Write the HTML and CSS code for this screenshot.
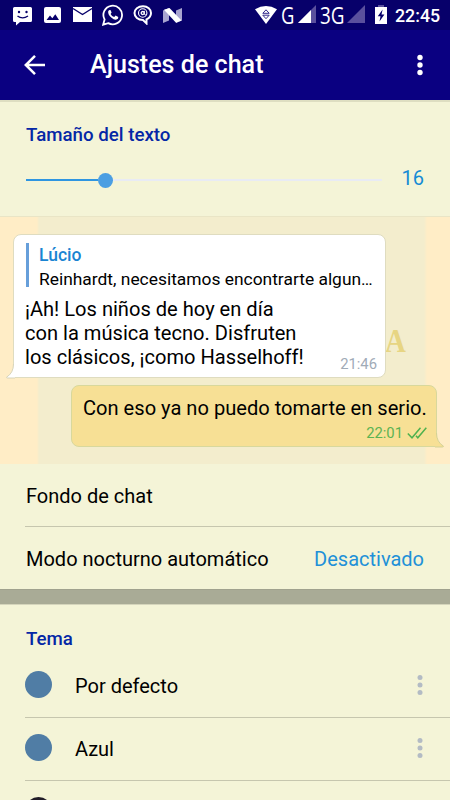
FILE: index.html
```html
<!DOCTYPE html>
<html lang="es">
<head>
    <meta charset="UTF-8">
    <meta name="viewport" content="width=device-width, initial-scale=1.0">
    <title>Ajustes de chat</title>
    <link rel="stylesheet" href="styles.css">
</head>
<body>
    <div class="status-bar">
        <div class="notifications">
            <svg width="19" height="19" viewBox="0 0 19 19">
                <path d="M1.500 0h16q1.500 0 1.500 1.500v12q0 1.500-1.500 1.500H7l-4 3.500V15H1.500Q0 15 0 13.500v-12Q0 0 1.500 0z" fill="#fff"/>
                <circle cx="6" cy="5" r="1.200" fill="#07006a"/>
                <circle cx="13.500" cy="5" r="1.200" fill="#07006a"/>
                <path d="M4.500 9q5 3.800 10.500 0" fill="none" stroke="#07006a" stroke-width="1.400"/>
            </svg>
            <svg class="n-image" width="17" height="16" viewBox="0 0 17 16">
                <rect width="17" height="16" rx="2" fill="#fff"/>
                <path d="M2.500 13l3.500-4.500 2.300 2.700 3-4 3.700 5.800z" fill="#07006a"/>
            </svg>
            <svg class="n-mail" width="19" height="15" viewBox="0 0 19 15">
                <path d="M0 0h19v15H0z" fill="#fff"/>
                <path d="M0 1.500l9.500 6 9.500-6" fill="none" stroke="#07006a" stroke-width="1.400"/>
            </svg>
            <svg class="n-whatsapp" width="22" height="22" viewBox="0 0 22 22">
                <path d="M1.200 20.600l1.400-5.100a9.300 9.300 0 1 1 3.600 3.600z" fill="none" stroke="#fff" stroke-width="1.800"/>
                <path d="M6.200 7.300q1-1.900 2.300-1.200l1.100 2.500-1 1.300q1.100 2.200 3.600 3.200l1.400-1.500 2.700 1.300q.2 2-1.900 2.700-2.100.5-5.200-2.100-3.500-3-3-6.200z" fill="#fff"/>
            </svg>
            <svg class="n-chat" width="20" height="20" viewBox="0 0 20 20">
                <path d="M10 1.200c-5 0-8.500 3-8.500 6.900s3.500 7 8.500 7l3.500 3.300v-4c3-1.300 4.500-3.500 4.500-6.300 0-3.900-3.300-6.900-8-6.900z" fill="none" stroke="#fff" stroke-width="2"/>
                <circle cx="9.700" cy="8" r="4.200" fill="none" stroke="#fff" stroke-width="1.100"/>
                <circle cx="9.700" cy="8" r="1.500" fill="none" stroke="#fff" stroke-width="1.300"/>
                <path d="M11.400 5.800v3.600l1.600.8" fill="none" stroke="#fff" stroke-width=".9"/>
            </svg>
            <svg class="n-nougat" width="19" height="15" viewBox="0 0 19 15">
                <path d="M0 2.500L6 0v12.500L0 15z" fill="#a8a4cf"/>
                <path d="M13 2.500L19 0v12.500L13 15z" fill="#a8a4cf"/>
                <path d="M1 1.800L6.500 0l12 12.500-5.500 2.300z" fill="#fff"/>
            </svg>
        </div>
        <div class="system">
            <svg class="s-wifi" width="22" height="18" viewBox="0 0 22 18">
                <path d="M0 3.200q11-6.400 22 0L11 18z" fill="#fff"/>
                <path d="M7.800 7.300L11 3.800l3.200 3.500zM7.800 9.200h6.400L11 12.700z" fill="#fff" stroke="#33298c" stroke-width="1"/>
            </svg>
            <span class="network g">G</span>
            <svg class="s-signal" width="18" height="18" viewBox="0 0 18 18">
                <path d="M18 0v18H0z" fill="#5a509d"/>
                <path d="M13 5v13H0z" fill="#fff"/>
            </svg>
            <span class="network g3">3G</span>
            <svg class="s-signal2" width="18" height="18" viewBox="0 0 18 18">
                <path d="M18 0v18H0z" fill="#5a509d"/>
            </svg>
            <svg class="s-battery" width="12" height="19" viewBox="0 0 12 19">
                <path d="M3 0h6v2H3z" fill="#5a509d"/>
                <path d="M0 2h12v17H0z" fill="#fff"/>
                <path d="M7.600 4.500L2.800 11.300h2.700l-1 5.200 4.900-7H6.500z" fill="#07006a"/>
            </svg>
            <span class="clock">22:45</span>
        </div>
    </div>

    <header class="toolbar">
        <svg width="22" height="22" viewBox="0 0 22 22">
            <path d="M21 11H2.500M11 1.800L1.800 11l9.200 9.200" fill="none" stroke="#fff" stroke-width="2.500"/>
        </svg>
        <h1>Ajustes de chat</h1>
        <svg class="dots" width="6" height="22" viewBox="0 0 6 22">
            <circle cx="3" cy="3.500" r="2.700"/>
            <circle cx="3" cy="11" r="2.700"/>
            <circle cx="3" cy="18.500" r="2.700"/>
        </svg>
    </header>

    <section class="text-size">
        <h2>Tamaño del texto</h2>
        <div class="slider-row">
            <div class="slider">
                <div class="filled"></div>
                <div class="thumb"></div>
                <div class="rest"></div>
            </div>
            <span class="size-value">16</span>
        </div>
    </section>

    <section class="preview">
        <span class="wallpaper-letter">A</span>
        <div class="bubble incoming">
            <div class="reply">
                <div class="reply-name">Lúcio</div>
                <div class="reply-text">Reinhardt, necesitamos encontrarte algun…</div>
            </div>
            <p>¡Ah! Los niños de hoy en día<br>con la música tecno. Disfruten<br>los clásicos, ¡como Hasselhoff!</p>
            <span class="time">21:46</span>
            <svg class="tail" width="9" height="15" viewBox="0 0 9 15">
                <path d="M9 0H7.500Q7.500 9 .5 13.200q0 .8 1.200.8H9z" fill="#fff"/>
                <path d="M7.500 0Q7.500 9 .5 13.200q0 .8 1.200.8H9" fill="none" stroke="#d2d0b5" stroke-width=".9"/>
            </svg>
        </div>
        <div class="bubble outgoing">
            <p>Con eso ya no puedo tomarte en serio.</p>
            <div class="sent">
                <span>22:01</span>
                <svg width="20" height="12" viewBox="0 0 20 12">
                    <path d="M.8 6.500l4.200 4.300L13.500.8M9 8.800l1.800 2L19.300.8" fill="none" stroke="#4fb14e" stroke-width="1.500"/>
                </svg>
            </div>
            <svg class="tail" width="9" height="15" viewBox="0 0 9 15">
                <path d="M0 0h1.500q0 9 7 13.200 0 .8-1.200.8H0z" fill="#f7e095"/>
                <path d="M1.500 0q0 9 7 13.200 0 .8-1.200.8H0" fill="none" stroke="#cfd094" stroke-width=".9"/>
            </svg>
        </div>
    </section>

    <section class="options">
        <div class="row">
            <span>Fondo de chat</span>
        </div>
        <div class="row">
            <span>Modo nocturno automático</span>
            <span class="row-value">Desactivado</span>
        </div>
    </section>

    <div class="separator"></div>

    <section class="themes">
        <h2>Tema</h2>
        <div class="theme">
            <span class="color"></span>
            <span class="name">Por defecto</span>
            <svg class="dots" width="6" height="22" viewBox="0 0 6 22">
                <circle cx="3" cy="3.500" r="2.500"/>
                <circle cx="3" cy="11" r="2.500"/>
                <circle cx="3" cy="18.500" r="2.500"/>
            </svg>
        </div>
        <div class="theme">
            <span class="color"></span>
            <span class="name">Azul</span>
            <svg class="dots" width="6" height="22" viewBox="0 0 6 22">
                <circle cx="3" cy="3.500" r="2.500"/>
                <circle cx="3" cy="11" r="2.500"/>
                <circle cx="3" cy="18.500" r="2.500"/>
            </svg>
        </div>
        <div class="theme">
            <span class="color dark"></span>
        </div>
    </section>
</body>
</html>
```
FILE: styles.css
```css
* {
    box-sizing: border-box;
}
body {
    display: flex;
    flex-direction: column;
    margin: 0;
    height: 800px;
    overflow: hidden;
    background: #f4f4d7;
    color: #000;
    font-family: Roboto, sans-serif;
    font-size: 20px;
}
h1, h2, p {
    margin: 0;
}
svg {
    display: block;
    flex-shrink: 0;
}

/* status bar */
.status-bar {
    display: flex;
    flex-shrink: 0;
    justify-content: space-between;
    height: 30px;
    background: #07006a;
}
.notifications, .system {
    display: flex;
    align-items: flex-start;
}
.notifications {
    padding: 7px 0 0 13px;
}
.n-image {
    margin-left: 12px;
}
.n-mail {
    margin-left: 12px;
}
.n-whatsapp {
    margin: -3px 0 0 10px;
}
.n-chat {
    margin: -2px 0 0 9px;
}
.n-nougat {
    margin: 1px 0 0 10px;
}
.system {
    padding: 5px 10px 0 0;
}
.network {
    color: #fff;
    font-family: "Open Sans", sans-serif;
    font-size: 23px;
    line-height: 30px;
    margin-top: -5px;
    transform-origin: left;
    white-space: nowrap;
}
.g {
    width: 14px;
    margin-left: 4px;
    transform: scaleX(.8);
}
.g3 {
    width: 25px;
    margin-left: 4px;
    transform: scaleX(.82);
}
.s-wifi {
    margin-top: 1px;
}
.s-signal {
    margin-left: 3px;
}
.s-signal2 {
    margin-left: 2px;
}
.s-battery {
    margin-left: 10px;
}
.clock {
    width: 45px;
    margin-left: 8px;
    color: #fff;
    font-size: 17.800px;
    font-weight: 500;
    line-height: 22px;
    white-space: nowrap;
}

/* toolbar */
.toolbar {
    display: flex;
    flex-shrink: 0;
    align-items: center;
    height: 70px;
    padding: 0 27px 0 24px;
    background: #0a0081;
}
.toolbar h1 {
    flex: 1;
    margin-left: 44px;
    color: #fff;
    font-size: 25.100px;
    font-weight: 500;
    line-height: 30px;
}
.toolbar .dots {
    fill: #fff;
}

/* text size */
.text-size {
    flex-shrink: 0;
    height: 116px;
    padding: 22px 26px 0;
    border-top: 2px solid #dedec1;
}
h2 {
    color: #0527a6;
    font-size: 18.700px;
    font-weight: 500;
    line-height: 22px;
}
.slider-row {
    display: flex;
    align-items: center;
    justify-content: space-between;
    height: 30px;
    margin-top: 19px;
}
.slider {
    display: flex;
    align-items: center;
    width: 356px;
}
.filled {
    width: 72px;
    height: 2px;
    background: #2e95e1;
}
.thumb {
    width: 15px;
    height: 15px;
    border-radius: 50%;
    background: #4b9ee2;
}
.rest {
    flex: 1;
    height: 2px;
    background: #e8ebf4;
}
.size-value {
    margin-top: -4px;
    color: #168bd5;
    line-height: 26px;
}

/* chat preview */
.preview {
    position: relative;
    display: flex;
    flex-direction: column;
    flex-shrink: 0;
    height: 248px;
    padding: 17px 13px 0;
    border-top: 1px solid #e9e5c6;
    background: linear-gradient(90deg, #ffedc6 37px, #f3edcd 39px, #f3edcd 424px, #ffedc6 427px);
}
.wallpaper-letter {
    position: absolute;
    left: 385px;
    top: 105px;
    color: #e7d583;
    font-family: "Liberation Serif", serif;
    font-size: 34px;
    font-weight: bold;
    line-height: 38px;
    transform: scaleX(.85);
    transform-origin: left;
}
.bubble {
    position: relative;
    border-radius: 8px;
    line-height: 24px;
}
.bubble p {
    font-size: 20.100px;
    white-space: nowrap;
}
.incoming {
    width: 373px;
    height: 144px;
    padding: 10px 12px 0;
    background: #fff;
    border: 1px solid #dfdcc0;
    border-bottom-left-radius: 0;
}
.reply {
    height: 44px;
    padding-left: 10px;
    border-left: 3px solid #679fda;
    font-size: 17.500px;
    line-height: 24px;
    white-space: nowrap;
}
.reply-name {
    margin-top: -2px;
    color: #1a84d2;
    font-weight: 500;
}
.reply-text {
    font-size: 17.400px;
}
.incoming p {
    margin: 10px 0 0 -1px;
}
.time {
    position: absolute;
    right: 8px;
    bottom: 3px;
    color: #a1abb7;
    font-size: 14.800px;
    line-height: 20px;
}
.tail {
    position: absolute;
    bottom: -2px;
}
.incoming .tail {
    left: -8px;
}
.outgoing {
    align-self: flex-end;
    width: 366px;
    height: 62px;
    margin-top: 7px;
    padding: 10px 10px 0 11px;
    background: #f7e095;
    border: 1px solid #d8d89c;
    border-bottom-right-radius: 0;
}
.outgoing .tail {
    right: -8px;
}
.sent {
    display: flex;
    align-items: center;
    justify-content: flex-end;
    gap: 4px;
    margin: 3px -1px 0 0;
    color: #5cb353;
    font-size: 14.800px;
    line-height: 20px;
}

/* options */
.options {
    flex-shrink: 0;
}
.row {
    display: flex;
    align-items: center;
    justify-content: space-between;
    height: 63px;
    margin: 0 26px 0 25px;
    padding: 2px 0 0 1px;
}
.row + .row {
    height: 62px;
}
.row:first-child {
    margin-right: 0;
    border-bottom: 1px solid #c6c6ae;
}
.row-value {
    color: #2190d8;
}
.separator {
    flex-shrink: 0;
    height: 16px;
    background: #a9ab96;
    border-top: 1px solid #a0a28e;
    border-bottom: 1px solid #d5d5bc;
}

/* themes */
.themes {
    flex: 1;
    overflow: hidden;
}
.themes h2 {
    height: 50px;
    padding: 23px 26px 0;
}
.theme {
    display: flex;
    align-items: center;
    height: 63px;
    margin-left: 25px;
    padding: 0 27px 3px 0;
    border-bottom: 1px solid #c6c6ae;
}
.color {
    width: 27px;
    height: 27px;
    border-radius: 50%;
    background: #507da5;
}
.color.dark {
    background: #211c28;
}
.name {
    flex: 1;
    margin: 3px 0 0 23px;
}
.theme .dots {
    fill: #b3bbc4;
}
```
